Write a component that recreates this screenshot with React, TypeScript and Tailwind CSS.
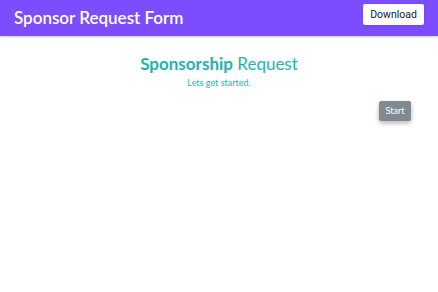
export default function App() {
  return (
    <div className="min-h-[292px] bg-white font-['Lato','Open_Sans',sans-serif]">
      <header className="flex h-[36px] items-start justify-between bg-[#7c4dff] pl-[14px] pr-[14px] shadow-[0_1px_2px_rgba(124,77,255,0.35)]">
        <h1 className="pt-[8px] text-[17px] font-semibold leading-[20px] text-white">Sponsor Request Form</h1>
        <button className="mt-[4px] h-[21px] w-[61px] rounded-[2px] bg-white text-[10.5px] text-[#222] font-['Roboto',sans-serif] shadow-sm">
          Download
        </button>
      </header>

      <main className="flex flex-col items-center pt-[16px]">
        <h2 className="text-[17px] leading-[24px] text-[#1fb3b0]">
          <span className="font-bold">Sponsorship</span> Request
        </h2>
        <p className="mt-[1px] text-[9px] leading-[12px] text-[#1fb3b0]">Lets get started.</p>
      </main>

      <div className="flex justify-end pr-[27px] pt-[12px]">
        <button className="h-[20px] w-[32px] rounded-[2px] bg-[#7f8a91] text-[9px] text-white shadow-[0_2px_5px_rgba(0,0,0,0.3)]">
          Start
        </button>
      </div>
    </div>
  )
}
